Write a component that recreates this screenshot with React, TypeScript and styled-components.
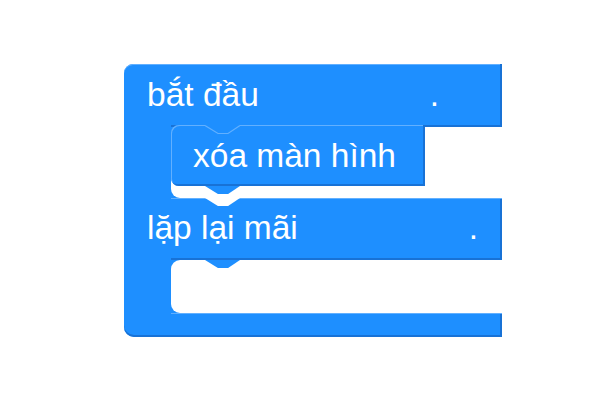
import styled, { createGlobalStyle, css } from 'styled-components';

const BLUE = '#1e8fff';
const DARK = '#1872d6';
const LIGHT = '#62b0ff';
const ARM = 47;

const GlobalStyle = createGlobalStyle`
  html, body {
    margin: 0;
    padding: 0;
    background: #fff;
  }
  body {
    font-family: "Liberation Sans", Arial, sans-serif;
  }
`;

const Stage = styled.div`
  width: 600px;
  height: 400px;
  box-sizing: border-box;
  padding: 64px 0 0 124px;
`;

const Block = styled.div`
  width: 378px;
  display: flex;
  flex-direction: column;
`;

// a horizontal band of the C block; the arm side of it joins the next band
const Bar = styled.div<{ $h: number; $radius?: string; $cap?: boolean; $last?: boolean }>`
  position: relative;
  height: ${(p) => p.$h}px;
  box-sizing: border-box;
  padding: 0 0 2px 23px;
  display: flex;
  align-items: center;
  background: ${BLUE};
  border-radius: ${(p) => p.$radius || '0'};
  box-shadow: inset -2px 0 0 ${DARK}
    ${(p) => (p.$cap ? `, inset 0 1px 0 ${LIGHT}` : '')}
    ${(p) => (p.$last ? `, inset 0 -2px 0 ${DARK}` : '')};
  color: #fff;
  font-size: 33.5px;

  ${(p) =>
    !p.$cap &&
    css`
      &::before {
        content: '';
        position: absolute;
        left: ${ARM}px;
        right: 0;
        top: 0;
        height: 1px;
        background: ${LIGHT};
      }
    `}

  ${(p) =>
    !p.$last &&
    css`
      &::after {
        content: '';
        position: absolute;
        left: ${ARM}px;
        right: 0;
        bottom: 0;
        height: 2px;
        background: ${DARK};
      }
    `}
`;

const Label = styled.span`
  white-space: nowrap;
`;

const Dot = styled.span`
  margin-left: 171px;
`;

const Mouth = styled.div<{ $h: number }>`
  display: flex;
  height: ${(p) => p.$h}px;
  padding-left: ${ARM}px;
  background: ${BLUE};
`;

const Slot = styled.div`
  position: relative;
  flex: 1;
  background: #fff;
  border-radius: 9px 0 0 9px;
`;

const notch = css`
  position: absolute;
  left: 34px;
  width: 35px;
  height: 8px;
  clip-path: polygon(0 0, 100% 0, 66% 100%, 37% 100%);
`;

const Tab = styled.span`
  ${notch};
  top: 0;
  background: ${BLUE};
`;

const Dip = styled.span`
  ${notch};
  z-index: 1;
  bottom: -8px;
  background: #fff;
`;

const Statement = styled.div`
  position: relative;
  z-index: 2;
  width: 254px;
  height: 61px;
  margin-top: -2px;
  box-sizing: border-box;
  padding-left: 22px;
  display: flex;
  align-items: center;
  background: ${BLUE};
  border-radius: 8px 0 0 8px;
  box-shadow: inset -2px -2px 0 ${DARK}, inset 1px 1px 0 ${LIGHT};
  color: #fff;
  font-size: 33.5px;
`;

const StatementTab = styled.span`
  ${notch};
  bottom: -8px;
  background: ${BLUE};
`;

const NotchLine = styled.svg`
  position: absolute;
  left: 34px;
  top: 0;
`;

export default function App() {
  return (
    <>
      <GlobalStyle />
      <Stage>
        <Block>
          <Bar $h={63} $radius="9px 0 0 0" $cap>
            <Label>bắt đầu</Label>
            <Dot>.</Dot>
          </Bar>
          <Mouth $h={71}>
            <Slot>
              <Statement>
                <NotchLine width="35" height="10" viewBox="0 0 35 10">
                  <rect x="0" y="0" width="35" height="2" fill={BLUE} />
                  <polyline points="0,0.5 13,8.5 23,8.5 35,0.5" fill="none" stroke={LIGHT} strokeWidth="1.2" />
                </NotchLine>
                <Label>xóa màn hình</Label>
                <StatementTab />
              </Statement>
              <Dip />
            </Slot>
          </Mouth>
          <Bar $h={62}>
            <Label>lặp lại mãi</Label>
            <Dot>.</Dot>
          </Bar>
          <Mouth $h={53}>
            <Slot>
              <Tab />
            </Slot>
          </Mouth>
          <Bar $h={24} $radius="0 0 0 10px" $last />
        </Block>
      </Stage>
    </>
  );
}
